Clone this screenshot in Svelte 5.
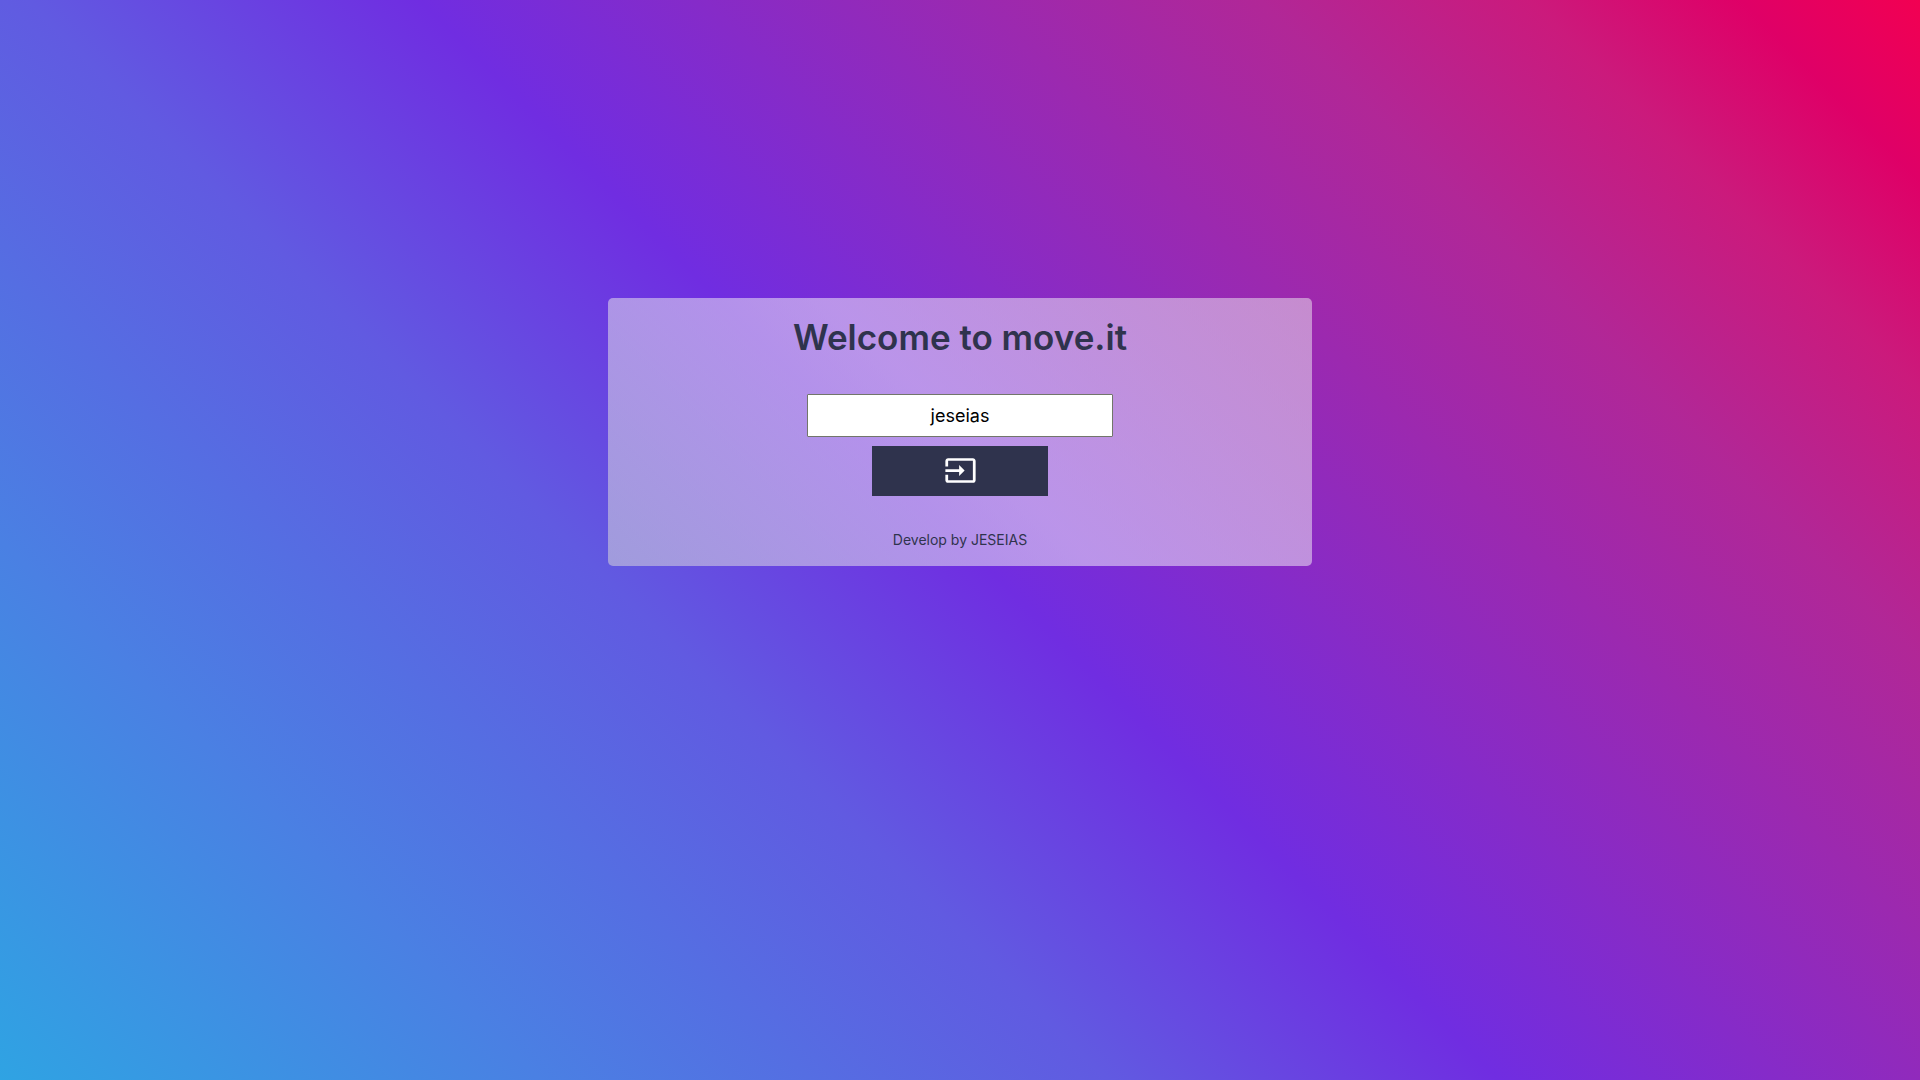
<script>
  let username = $state('jeseias');
</script>

<svelte:head>
  <title>move.it</title>
</svelte:head>

<main class="page">
  <form class="card" onsubmit={(event) => event.preventDefault()}>
    <h1>Welcome to move.it</h1>
    <input type="text" aria-label="Username" bind:value={username} />
    <button type="submit" aria-label="Enter">
      <svg viewBox="0 0 24 24" aria-hidden="true">
        <path d="M21 3.01H3c-1.1 0-2 .9-2 2V9h2V4.99h18v14.03H3V15H1v4.01c0 1.1.9 1.98 2 1.98h18c1.1 0 2-.88 2-1.98v-14c0-1.11-.9-2-2-2zM11 16l4-4-4-4v3H1v2h10v3z" />
      </svg>
    </button>
    <p>Develop by JESEIAS</p>
  </form>
</main>

<style>
  :global(body) {
    margin: 0;
  }

  .page {
    box-sizing: border-box;
    min-height: 100vh;
    padding: 298px 24px 24px;
    font-family: Inter, 'Liberation Sans', sans-serif;
    color: #2f334d;
    background: linear-gradient(45deg, #2fa3e3 0%, #4a80e3 18%, #615ae1 37%, #702de1 50%, #b12797 78%, #cb1a7c 87%, #df0067 94%, #f20052 100%);
  }

  .card {
    box-sizing: border-box;
    display: flex;
    flex-direction: column;
    align-items: center;
    max-width: 704px;
    margin: 0 auto;
    padding: 17px 16px;
    border-radius: 5px;
    background: linear-gradient(45deg, rgba(222, 222, 216, 0.5) 0%, rgba(252, 252, 252, 0.5) 50%, rgba(238, 238, 240, 0.5) 100%);
  }

  h1 {
    margin: 0 0 35px;
    font-size: 35px;
    font-weight: 600;
    line-height: 44px;
    text-align: center;
  }

  input {
    box-sizing: border-box;
    width: 306px;
    max-width: 100%;
    height: 43px;
    margin: 0 0 9px;
    padding: 8px;
    border: 1px solid #72766a;
    border-radius: 1px;
    font: 400 18px/24px Inter, 'Liberation Sans', sans-serif;
    text-align: center;
    color: #000;
    background: #fff;
  }

  button {
    box-sizing: border-box;
    display: flex;
    align-items: center;
    justify-content: center;
    width: 176px;
    height: 50px;
    margin: 0 0 35px;
    padding: 0 0 1px;
    border: 0;
    color: #fff;
    background: #2f334d;
    cursor: pointer;
  }

  svg {
    width: 33px;
    height: 33px;
    fill: currentColor;
  }

  p {
    margin: 0;
    font-size: 14px;
    line-height: 18px;
  }
</style>
